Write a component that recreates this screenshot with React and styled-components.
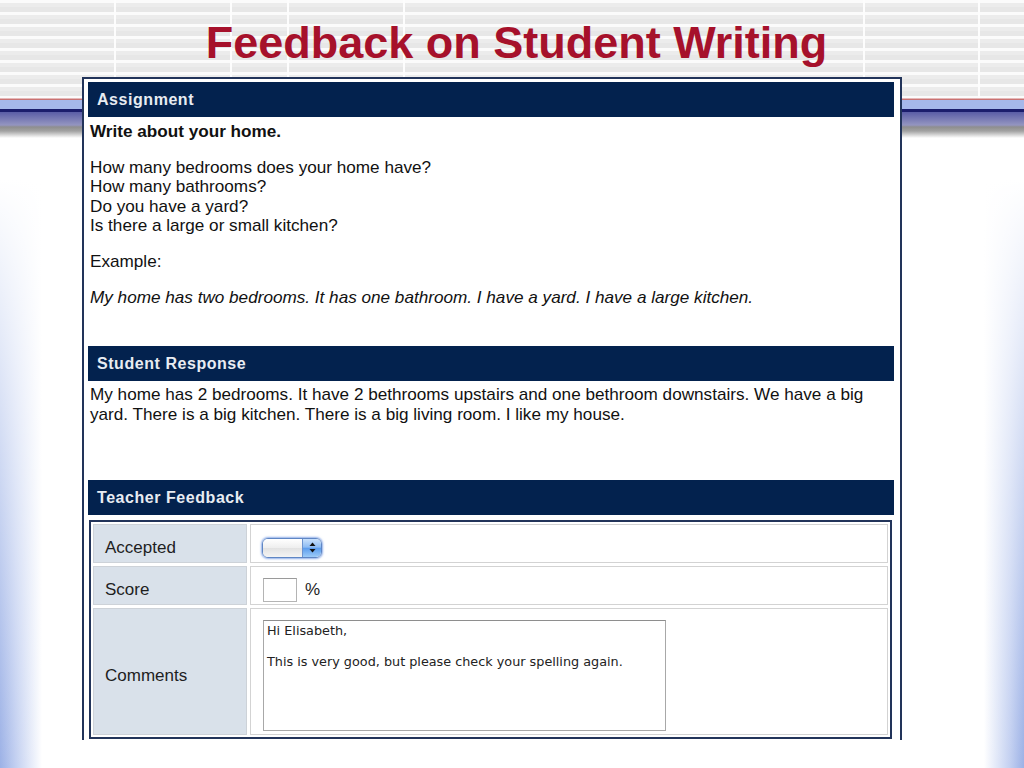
import React from "react";
import styled, { createGlobalStyle } from "styled-components";

const GlobalStyle = createGlobalStyle`
  html, body { margin: 0; padding: 0; background: #fff; }
  body { font-family: "Liberation Sans", Arial, sans-serif; }
  * { box-sizing: border-box; }
`;

const vline = (x) => `linear-gradient(#fdfdfd, #fdfdfd) ${x}px 0 / 2px 98px no-repeat`;

const Slide = styled.div`
  width: 1024px;
  height: 768px;
  overflow: hidden;
  display: flex;
  flex-direction: column;
  background:
    ${vline(114)},
    ${vline(230)},
    ${vline(287)},
    ${vline(403)},
    ${vline(863)},
    ${vline(978)},
    repeating-linear-gradient(to bottom, #fbfbfb 0 3px, #ececec 3px 7px, #e7e7e7 7px 12px) 0 0 / 100% 98px no-repeat,
    linear-gradient(
      to bottom,
      #ffffff 0,
      #c97272 1px,
      #c97272 2px,
      #a6b8ea 2.5px,
      #a6b8ea 11px,
      #1b1d6c 11.5px,
      #1b1d6c 13.5px,
      #5a5da6 14px,
      #9495c0 27px,
      #8e8e8e 29px,
      #a2a2a2 33px,
      #ffffff 40px
    ) 0 98px / 100% 40px no-repeat,
    linear-gradient(
      to bottom,
      #ffffff 0,
      #ffffff 180px,
      rgba(255, 255, 255, 0.55) 440px,
      rgba(255, 255, 255, 0) 768px
    ),
    linear-gradient(to right, #9cb1e6 0, #c3d0f1 16px, #ffffff 42px) left top / 42px 100% no-repeat,
    linear-gradient(to left, #9cb1e6 0, #c3d0f1 14px, #ffffff 40px) right top / 40px 100% no-repeat,
    #ffffff;
`;

const Title = styled.h1`
  margin: 17px 0 0 0;
  padding-left: 9px;
  height: 52px;
  line-height: 52px;
  text-align: center;
  font-family: "Liberation Sans", Arial, sans-serif;
  font-weight: bold;
  font-size: 45px;
  color: #a6112b;
`;

const Panel = styled.div`
  margin: 8px 0 0 82px;
  width: 820px;
  background: #fff;
  border: 2px solid #22345a;
  border-bottom: none;
  padding: 3px 6px 1px 4px;
  font-family: "Liberation Sans", Arial, sans-serif;
  font-size: 17.15px;
  line-height: 19.4px;
  color: #111;
`;

const SectionHeader = styled.div`
  height: 35px;
  display: flex;
  align-items: center;
  padding-left: 9px;
  background: #03224e;
  color: #e8ecf2;
  font-weight: bold;
  font-size: 16px;
  letter-spacing: 0.55px;
`;

const SectionBody = styled.div`
  padding: ${(p) => p.$pt}px 0 ${(p) => p.$pb}px 2px;
`;

const Para = styled.p`
  margin: 0 0 16.5px 0;
  font-weight: ${(p) => (p.$bold ? "bold" : "normal")};
  font-style: ${(p) => (p.$italic ? "italic" : "normal")};
  &:last-child { margin-bottom: 0; }
`;

const FeedbackTable = styled.div`
  margin: 5px 2px 0 1px;
  border: 2px solid #22345a;
  padding: 2px;
  display: grid;
  grid-template-columns: 154px 638px;
  grid-template-rows: 39px 39px 127px;
  gap: 3px;
`;

const LabelCell = styled.div`
  display: flex;
  align-items: center;
  padding: 8px 0 0 11px;
  background: #d9e1ea;
  border: 1px solid #cdd2d8;
  color: #1e1e1e;
  font-size: 17px;
`;

const ValueCell = styled.div`
  display: flex;
  align-items: ${(p) => (p.$top ? "flex-start" : "center")};
  gap: 8px;
  padding: ${(p) => (p.$top ? "11px 0 0 12px" : "8px 0 0 12px")};
  background: #fff;
  border: 1px solid #d3d3d3;
`;

const PopupSelect = styled.div`
  margin-left: -1px;
  width: 60px;
  height: 20px;
  display: flex;
  border: 1px solid #5f86c4;
  border-radius: 6px;
  overflow: hidden;
  box-shadow: 0 0 2px 1px rgba(110, 150, 225, 0.75);
`;

const SelectFace = styled.div`
  flex: 1;
  background: linear-gradient(to bottom, #ffffff, #eeeeee 50%, #e2e2e2 51%, #f4f4f4);
`;

const SelectArrows = styled.div`
  width: 19px;
  display: flex;
  align-items: center;
  justify-content: center;
  border-left: 1px solid #6c93cf;
  background: linear-gradient(to bottom, #c9e0fb, #8dbcf3 45%, #5d9ded 52%, #9ccbf8);
`;

const ScoreInput = styled.input`
  width: 34px;
  height: 24px;
  padding: 0 2px;
  border: 1px solid #b4b4b4;
  border-top-color: #9a9a9a;
  background: #fff;
  font-family: "DejaVu Sans", sans-serif;
  font-size: 13px;
`;

const Percent = styled.span`
  font-size: 17px;
  color: #1e1e1e;
`;

const CommentBox = styled.textarea`
  width: 403px;
  height: 111px;
  margin: 0;
  padding: 2px 3px;
  resize: none;
  border: 1px solid #a8a8a8;
  border-top-color: #8e8e8e;
  background: #fff;
  color: #222;
  font-family: "DejaVu Sans", "Verdana", sans-serif;
  font-size: 12.8px;
  line-height: 15.5px;
  overflow: hidden;
  outline: none;
`;

const Arrows = () => (
  <svg width="7" height="11" viewBox="0 0 7 11">
    <path d="M3.5 0.5 L6.5 4 L0.5 4 Z" fill="#111" />
    <path d="M3.5 10.5 L6.5 7 L0.5 7 Z" fill="#111" />
  </svg>
);

export default function App() {
  return (
    <>
      <GlobalStyle />
      <Slide>
        <Title>Feedback on Student Writing</Title>
        <Panel>
          <SectionHeader>Assignment</SectionHeader>
          <SectionBody $pt={5} $pb={39}>
            <Para $bold>Write about your home.</Para>
            <Para>
              How many bedrooms does your home have?
              <br />
              How many bathrooms?
              <br />
              Do you have a yard?
              <br />
              Is there a large or small kitchen?
            </Para>
            <Para>Example:</Para>
            <Para $italic>
              My home has two bedrooms. It has one bathroom. I have a yard. I have a large kitchen.
            </Para>
          </SectionBody>

          <SectionHeader>Student Response</SectionHeader>
          <SectionBody $pt={4} $pb={56}>
            <Para>
              My home has 2 bedrooms. It have 2 bethrooms upstairs and one bethroom downstairs. We have a big
              yard. There is a big kitchen. There is a big living room. I like my house.
            </Para>
          </SectionBody>

          <SectionHeader>Teacher Feedback</SectionHeader>
          <FeedbackTable>
            <LabelCell>Accepted</LabelCell>
            <ValueCell>
              <PopupSelect>
                <SelectFace />
                <SelectArrows>
                  <Arrows />
                </SelectArrows>
              </PopupSelect>
            </ValueCell>

            <LabelCell>Score</LabelCell>
            <ValueCell>
              <ScoreInput readOnly defaultValue="" />
              <Percent>%</Percent>
            </ValueCell>

            <LabelCell>Comments</LabelCell>
            <ValueCell $top>
              <CommentBox
                readOnly
                defaultValue={"Hi Elisabeth,\n\nThis is very good, but please check your spelling again."}
              />
            </ValueCell>
          </FeedbackTable>
        </Panel>
      </Slide>
    </>
  );
}
